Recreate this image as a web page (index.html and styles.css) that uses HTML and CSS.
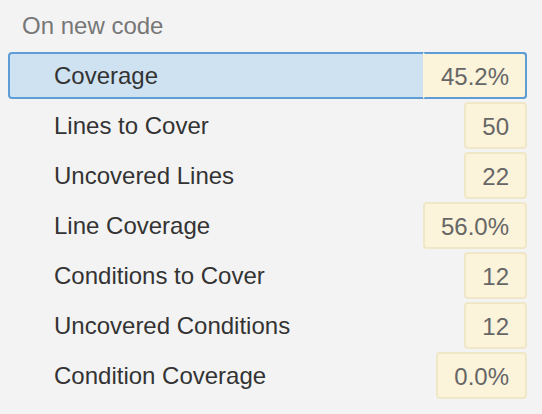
FILE: index.html
```html
<!DOCTYPE html>
<html>
<head>
<meta charset="utf-8">
<link rel="stylesheet" href="styles.css">
</head>
<body>
<div class="panel">
  <div class="heading">On new code</div>
  <div class="list">
    <div class="row selected"><span class="label">Coverage</span><span class="value">45.2%</span></div>
    <div class="row"><span class="label">Lines to Cover</span><span class="value">50</span></div>
    <div class="row"><span class="label">Uncovered Lines</span><span class="value">22</span></div>
    <div class="row"><span class="label">Line Coverage</span><span class="value">56.0%</span></div>
    <div class="row"><span class="label">Conditions to Cover</span><span class="value">12</span></div>
    <div class="row"><span class="label">Uncovered Conditions</span><span class="value">12</span></div>
    <div class="row"><span class="label">Condition Coverage</span><span class="value">0.0%</span></div>
  </div>
</div>
</body>
</html>
```

FILE: styles.css
```css
html, body {
  margin: 0;
  padding: 0;
  background: #f3f3f3;
}
body {
  font-family: "Liberation Sans", Arial, Helvetica, sans-serif;
  font-size: 24px;
}
.panel {
  padding: 0 15px 0 8px;
}
.heading {
  height: 52px;
  line-height: 52px;
  padding-left: 14px;
  color: #777777;
}
.list {
  display: flex;
  flex-direction: column;
  gap: 3px;
}
.row {
  display: flex;
  align-items: stretch;
  height: 47px;
  box-sizing: border-box;
  border: 2px solid transparent;
  border-radius: 4px;
}
.label {
  flex: 1;
  padding-left: 44px;
  display: flex;
  align-items: center;
  color: #333333;
}
.value {
  display: flex;
  align-items: center;
  margin: -2px -2px -2px 0;
  padding: 3px 16px 0;
  background: #fbf3da;
  border: 2px solid #f0e7c9;
  border-radius: 4px;
  color: #666666;
}
.row.selected {
  background: #cfe2f2;
  border-color: #5f9dd6;
}
.row.selected .value {
  border-color: #5f9dd6;
  border-left-color: transparent;
  border-radius: 0 4px 4px 0;
}
```
